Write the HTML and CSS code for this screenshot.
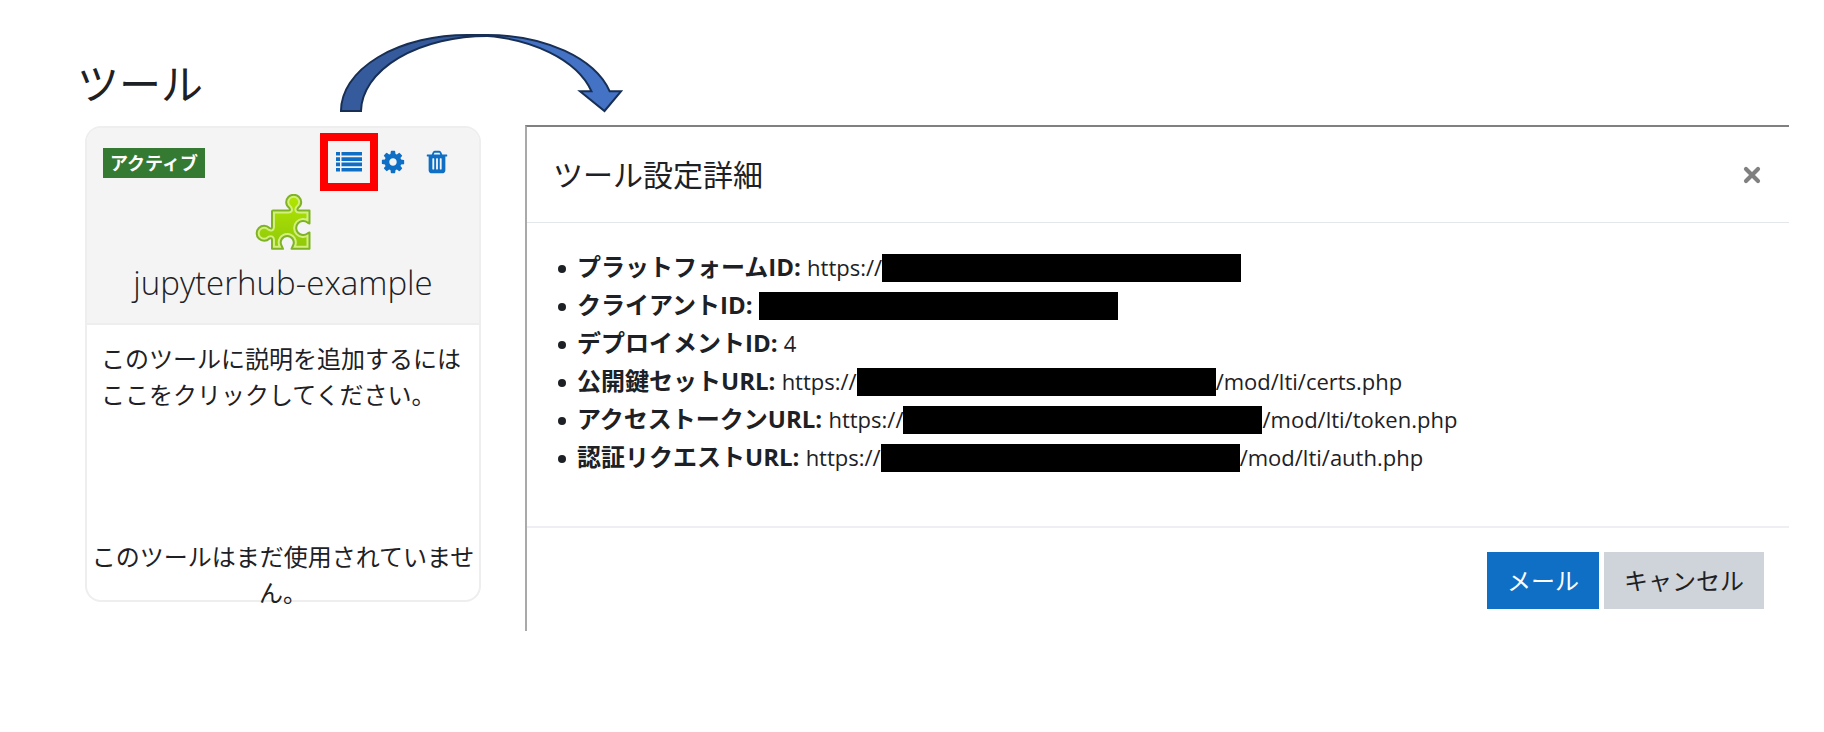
FILE: index.html
```
<!DOCTYPE html>
<html lang="ja">
<head>
<meta charset="utf-8">
<title>ツール</title>
<link rel="stylesheet" href="styles.css">
</head>
<body>
<main class="page">
  <h1 class="page-title">ツール</h1>

  <section class="card">
    <header class="card-header">
      <div class="card-bar">
        <span class="badge">アクティブ</span>
        <div class="actions">
          <button class="icon-button highlighted" type="button" aria-label="設定詳細を表示する">
            <svg width="26" height="22" viewBox="0 0 26 22" fill="currentColor">
              <path d="M0 1h4v3.600H0zM0 6.300h4v3.600H0zM0 11.600h4v3.600H0zM0 16.900h4v3.600H0zM5.500 1H26v3.600H5.500zM5.500 6.300H26v3.600H5.500zM5.500 11.600H26v3.600H5.500zM5.500 16.900H26v3.600H5.500z"/>
            </svg>
          </button>
          <button class="icon-button" type="button" aria-label="編集">
            <svg width="26" height="26" viewBox="0 0 1792 1792" fill="currentColor">
              <path d="M1152 896q0-106-75-181t-181-75-181 75-75 181 75 181 181 75 181-75 75-181zm512-109v222q0 12-8 23t-20 13l-185 28q-19 54-39 91 35 50 107 138 10 12 10 25t-9 23q-27 37-99 108t-94 71q-12 0-26-9l-138-108q-44 23-91 38-16 136-29 186-7 28-36 28h-222q-14 0-24.500-8.500t-11.500-21.500l-28-184q-49-16-90-37l-141 107q-10 9-25 9-14 0-25-11-126-114-165-168-7-10-7-23 0-12 8-23 15-21 51-66.500t54-70.500q-27-50-41-99l-183-27q-13-2-21-12.500t-8-23.500v-222q0-12 8-23t19-13l186-28q14-46 39-92-40-57-107-138-10-12-10-24 0-10 9-23 26-36 98.500-107.500t94.500-71.500q13 0 26 10l138 107q44-23 91-38 16-136 29-186 7-28 36-28h222q14 0 24.500 8.500t11.500 21.500l28 184q49 16 90 37l142-107q9-9 24-9 13 0 25 10 129 119 165 170 7 8 7 22 0 12-8 23-15 21-51 66.500t-54 70.500q26 50 41 98l183 28q13 2 21 12.500t8 23.500z"/>
            </svg>
          </button>
          <button class="icon-button" type="button" aria-label="削除">
            <svg width="26" height="26" viewBox="0 0 1792 1792" fill="currentColor">
              <path d="M704 1376v-704q0-14-9-23t-23-9h-64q-14 0-23 9t-9 23v704q0 14 9 23t23 9h64q14 0 23-9t9-23zm256 0v-704q0-14-9-23t-23-9h-64q-14 0-23 9t-9 23v704q0 14 9 23t23 9h64q14 0 23-9t9-23zm256 0v-704q0-14-9-23t-23-9h-64q-14 0-23 9t-9 23v704q0 14 9 23t23 9h64q14 0 23-9t9-23zm-544-992h448l-48-117q-7-9-17-11h-317q-10 2-17 11zm928 32v64q0 14-9 23t-23 9h-96v948q0 83-47 143.500t-113 60.500h-832q-66 0-113-58.500t-47-141.500v-952h-96q-14 0-23-9t-9-23v-64q0-14 9-23t23-9h309l70-167q15-37 54-63t79-26h320q40 0 79 26t54 63l70 167h309q14 0 23 9t9 23z"/>
            </svg>
          </button>
        </div>
      </div>
      <svg class="puzzle" width="56" height="56" viewBox="0 0 56 56" aria-hidden="true">
        <defs>
          <linearGradient id="leaf" x1="0" y1="0" x2="0" y2="1">
            <stop offset="0" stop-color="#b2e600"/>
            <stop offset="1" stop-color="#8fc80c"/>
          </linearGradient>
          <clipPath id="piece">
            <path d="M18 16.500H33.500Q36 16.500 34.300 14Q31.200 11.500 31.200 8.300A7.500 7.500 0 0 1 46.200 8.300Q46.200 11.500 43 14Q41.500 16.500 44 16.500H54.500V29.500L52.500 28.500A7 7 0 1 0 52.500 39.500L54.500 38.500V54.800H36.500L38 51.500A6.500 6.500 0 1 0 26.500 51.500L28 54.800H17V46Q17 43.500 14.500 44.500A7.500 7.500 0 1 1 14.500 34Q17 35.500 17 33V17.500Q17 16.500 18 16.500Z"/>
          </clipPath>
        </defs>
        <g clip-path="url(#piece)" stroke-linejoin="round">
          <path fill="url(#leaf)" stroke="#d3f07c" stroke-width="6" d="M18 16.500H33.500Q36 16.500 34.300 14Q31.200 11.500 31.200 8.300A7.500 7.500 0 0 1 46.200 8.300Q46.200 11.500 43 14Q41.500 16.500 44 16.500H54.500V29.500L52.500 28.500A7 7 0 1 0 52.500 39.500L54.500 38.500V54.800H36.500L38 51.500A6.500 6.500 0 1 0 26.500 51.500L28 54.800H17V46Q17 43.500 14.500 44.500A7.500 7.500 0 1 1 14.500 34Q17 35.500 17 33V17.500Q17 16.500 18 16.500Z"/>
        </g>
        <path fill="none" stroke="#7fb325" stroke-width="2" stroke-linejoin="round" d="M18 16.500H33.500Q36 16.500 34.300 14Q31.200 11.500 31.200 8.300A7.500 7.500 0 0 1 46.200 8.300Q46.200 11.500 43 14Q41.500 16.500 44 16.500H54.500V29.500L52.500 28.500A7 7 0 1 0 52.500 39.500L54.500 38.500V54.800H36.500L38 51.500A6.500 6.500 0 1 0 26.500 51.500L28 54.800H17V46Q17 43.500 14.500 44.500A7.500 7.500 0 1 1 14.500 34Q17 35.500 17 33V17.500Q17 16.500 18 16.500Z"/>
      </svg>
      <h2 class="card-title">jupyterhub-example</h2>
    </header>
    <p class="card-description">このツールに説明を追加するにはここをクリックしてください。</p>
    <p class="card-usage">このツールはまだ使用されていません。</p>
  </section>

  <section class="dialog" role="dialog" aria-labelledby="dialog-title">
    <header class="dialog-header">
      <h2 class="dialog-title" id="dialog-title">ツール設定詳細</h2>
      <button class="close" type="button" aria-label="閉じる">
        <svg width="18" height="18" viewBox="0 0 18 18" fill="none" stroke="currentColor" stroke-width="4.200" stroke-linecap="round">
          <path d="M3 3l12 12M15 3L3 15"/>
        </svg>
      </button>
    </header>
    <ul class="details">
      <li><strong>プラットフォームID:</strong> <span class="url">https://</span><span class="redacted"></span></li>
      <li><strong>クライアントID:</strong> <span class="redacted"></span></li>
      <li><strong>デプロイメントID:</strong> <span class="url">4</span></li>
      <li><strong>公開鍵セットURL:</strong> <span class="url">https://</span><span class="redacted"></span><span class="url">/mod/lti/certs.php</span></li>
      <li><strong>アクセストークンURL:</strong> <span class="url">https://</span><span class="redacted"></span><span class="url">/mod/lti/token.php</span></li>
      <li><strong>認証リクエストURL:</strong> <span class="url">https://</span><span class="redacted"></span><span class="url">/mod/lti/auth.php</span></li>
    </ul>
    <footer class="dialog-footer">
      <button class="button primary" type="button">メール</button>
      <button class="button secondary" type="button">キャンセル</button>
    </footer>
  </section>

  <svg class="arrow" width="284" height="82" viewBox="339 32 284 82" stroke="#172f55" stroke-width="2" aria-hidden="true">
    <path fill="#4472c4" d="M467.500 35H487.500A126.500 76 0 0 1 609.700 91.300H621L604.500 111L580 91.300H591.500A126.500 76 0 0 0 477.500 35.300Z"/>
    <path fill="#365b9d" d="M341 111A126.500 76 0 0 1 467.500 35Q477.500 35 487.500 36A126.500 76 0 0 0 361 111Z"/>
  </svg>
</main>
</body>
</html>
```
FILE: styles.css
```
* {
  box-sizing: border-box;
}

body {
  margin: 0;
  background: #fff;
  color: #1d2125;
  font-family: "Open Sans", "Noto Sans CJK JP", sans-serif;
  font-size: 24px;
  line-height: 36px;
}

h1,
h2,
p,
ul {
  margin: 0;
  padding: 0;
  font-weight: 400;
}

button {
  margin: 0;
  padding: 0;
  border: 0;
  background: none;
  color: inherit;
  font: inherit;
  cursor: pointer;
}

svg {
  display: block;
}

.page {
  position: relative;
  display: grid;
  grid-template-columns: 396px minmax(0, 1fr);
  align-items: start;
  column-gap: 44px;
  padding: 54px 35px 100px 85px;
}

.page-title {
  grid-column: 1 / -1;
  margin-left: -8px;
  padding-bottom: 11px;
  font-size: 42px;
  line-height: 60px;
}

.arrow {
  position: absolute;
  top: 32px;
  left: 339px;
}

.card {
  margin-top: 1px;
  border: 2px solid #eee;
  border-radius: 16px;
}

.card-header {
  padding: 12px 16px 15px;
  border-bottom: 2px solid #eee;
  border-radius: 14px 14px 0 0;
  background: #f4f4f4;
}

.card-bar {
  display: flex;
  justify-content: space-between;
  align-items: flex-start;
  height: 44px;
}

.badge {
  margin-top: 8px;
  padding: 0 7px;
  background: #357a32;
  color: #fff;
  font-size: 18px;
  font-weight: 700;
  line-height: 30px;
}

.actions {
  display: flex;
  padding-right: 4px;
}

.icon-button {
  position: relative;
  display: flex;
  justify-content: center;
  align-items: center;
  width: 44px;
  height: 44px;
  color: #0f6fc5;
}

.highlighted::after {
  content: "";
  position: absolute;
  inset: -7px;
  border: 8px solid #f00;
}

.puzzle {
  margin: 10px auto 0;
}

.card-title {
  padding-top: 8px;
  font-size: 33px;
  font-weight: 300;
  line-height: 50px;
  text-align: center;
}

.card-description {
  min-height: 214px;
  padding: 16px 14px 0;
}

.card-usage {
  margin-bottom: -11px;
  text-align: center;
}

.dialog {
  border-top: 2px solid #808080;
  border-left: 2px solid #a9a9a9;
}

.dialog-header {
  display: flex;
  justify-content: space-between;
  align-items: center;
  padding: 24px 28px 23px 26px;
  border-bottom: 1px solid #e3e7ea;
}

.dialog-title {
  font-size: 30px;
  line-height: 48px;
}

.close {
  color: #808080;
}

.details {
  padding: 25px 24px 50px 50px;
  line-height: 38px;
  list-style: none;
}

.details li::before {
  content: "";
  display: inline-block;
  width: 8px;
  height: 8px;
  margin: 0 11px 0 -19px;
  border-radius: 50%;
  background: #1d2125;
  vertical-align: 3px;
}

.url {
  font-size: 22px;
}

.redacted {
  display: inline-block;
  width: 359px;
  height: 28px;
  background: #000;
  vertical-align: -6px;
}

.dialog-footer {
  display: flex;
  justify-content: flex-end;
  gap: 5px;
  padding: 24px 25px 22px;
  border-top: 2px solid #eeeff3;
}

.button {
  padding: 10px 20px;
  line-height: 37px;
}

.primary {
  background: #0f6fc5;
  color: #fff;
}

.secondary {
  background: #ced4da;
}
```
